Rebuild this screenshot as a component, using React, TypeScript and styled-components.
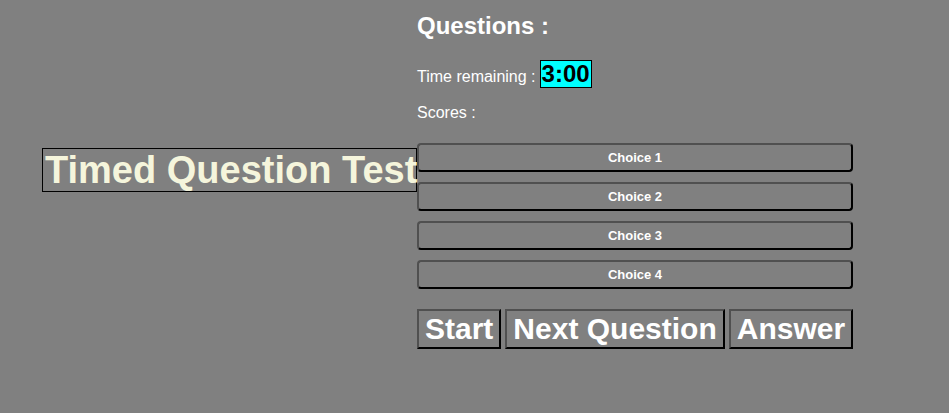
import React from "react";
import styled, { createGlobalStyle } from "styled-components";

const Global = createGlobalStyle`
  html, body { margin: 0; padding: 0; background: #808080; }
  body { font-family: "Liberation Sans", Arial, sans-serif; color: #ffffff; }
`;

const Page = styled.div`
  display: flex;
  align-items: center;
  padding-left: 42px;
`;

const TitleBox = styled.h1`
  margin: 0 0 9px;
  box-sizing: border-box;
  width: 375px;
  height: 44px;
  border: 1px solid #000;
  padding: 0 0 0 2px;
  font-size: 38px;
  line-height: 42px;
  font-weight: bold;
  color: #f5f5dc;
  white-space: nowrap;
  overflow: visible;
`;

const Column = styled.div`
  width: 436px;
  display: flex;
  flex-direction: column;
`;

const Heading = styled.h2`
  margin: 12px 0 0;
  font-size: 24px;
  line-height: 27px;
  font-weight: bold;
  color: #fff;
`;

const TimeRow = styled.div`
  margin-top: 21px;
  font-size: 16px;
  display: flex;
  align-items: baseline;
  gap: 4px;
`;

const Timer = styled.span`
  display: inline-block;
  background: #00ffff;
  color: #000;
  border: 1px solid #000;
  padding: 0 1px;
  font-size: 24px;
  font-weight: bold;
  line-height: 26px;
`;

const Scores = styled.div`
  margin-top: 15px;
  font-size: 16px;
  line-height: 19px;
`;

const Choices = styled.div`
  margin-top: 21px;
  display: flex;
  flex-direction: column;
  gap: 10px;
`;

const ChoiceButton = styled.button`
  box-sizing: border-box;
  width: 436px;
  height: 29px;
  background: #808080;
  color: #fff;
  font-family: "Liberation Sans", Arial, sans-serif;
  font-size: 13px;
  font-weight: bold;
  border-style: solid;
  border-width: 2px;
  border-color: #505050 #000 #000 #505050;
  border-radius: 4px;
  padding: 0;
`;

const Actions = styled.div`
  margin-top: 20px;
  display: flex;
  gap: 4px;
`;

const ActionButton = styled.button`
  box-sizing: border-box;
  height: 40px;
  background: #808080;
  color: #fff;
  font-family: "Liberation Sans", Arial, sans-serif;
  font-size: 30px;
  font-weight: bold;
  line-height: 34px;
  padding: 0 6px;
  border-style: solid;
  border-width: 2px;
  border-color: #505050 #000 #000 #505050;
  border-radius: 0;
  white-space: nowrap;
`;

export default function App() {
  return (
    <>
      <Global />
      <Page>
        <TitleBox>Timed Question Test</TitleBox>
        <Column>
          <Heading>Questions :</Heading>
          <TimeRow>
            <span>Time remaining :</span>
            <Timer>3:00</Timer>
          </TimeRow>
          <Scores>Scores :</Scores>
          <Choices>
            {["Choice 1", "Choice 2", "Choice 3", "Choice 4"].map((c) => (
              <ChoiceButton key={c}>{c}</ChoiceButton>
            ))}
          </Choices>
          <Actions>
            <ActionButton>Start</ActionButton>
            <ActionButton>Next Question</ActionButton>
            <ActionButton>Answer</ActionButton>
          </Actions>
        </Column>
      </Page>
    </>
  );
}
